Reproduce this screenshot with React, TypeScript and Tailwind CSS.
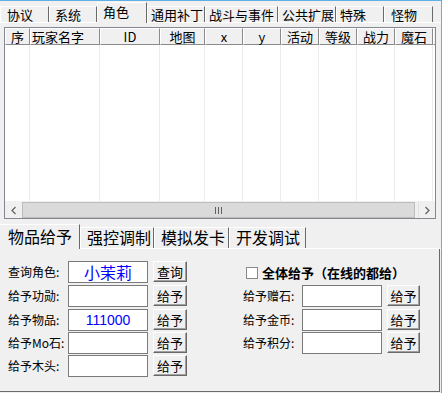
import React from 'react';

const topTabs = [
  { label: '协议', w: 'w-[49px]', pl: 'pl-[6px]' },
  { label: '系统', w: 'w-[48px]', pl: 'pl-[5px]' },
  { label: '角色', w: 'w-[50px]', pl: 'pl-[5px]', active: true },
  { label: '通用补丁', w: 'w-[58px]', pl: 'pl-[3px]' },
  { label: '战斗与事件', w: 'w-[73px]', pl: 'pl-[3px]' },
  { label: '公共扩展', w: 'w-[58px]', pl: 'pl-[3px]' },
  { label: '特殊', w: 'w-[48px]', pl: 'pl-[3px]' },
  { label: '怪物', w: 'w-[49px]', pl: 'pl-[6px]' },
];

const columns = [
  { label: '序', w: 'w-[25px]', align: 'justify-center' },
  { label: '玩家名字', w: 'w-[70px]', align: 'justify-start pl-[1px]' },
  { label: 'ID', w: 'w-[60px]', align: 'justify-center' },
  { label: '地图', w: 'w-[45px]', align: 'justify-center' },
  { label: 'x', w: 'w-[38px]', align: 'justify-center' },
  { label: 'y', w: 'w-[38px]', align: 'justify-center' },
  { label: '活动', w: 'w-[38px]', align: 'justify-center' },
  { label: '等级', w: 'w-[38px]', align: 'justify-center' },
  { label: '战力', w: 'w-[38px]', align: 'justify-center' },
  { label: '魔石', w: 'w-[38px]', align: 'justify-center' },
];

const bottomTabs = [
  { label: '物品给予', w: 'w-[80px]', active: true },
  { label: '强控调制', w: 'w-[74px]' },
  { label: '模拟发卡', w: 'w-[75px]' },
  { label: '开发调试', w: 'w-[77px]' },
];

const leftRows = [
  { label: '查询角色:', value: '小茉莉', btn: '查询', h: 'h-[24px]', big: true },
  { label: '给予功勋:', value: '', btn: '给予', h: 'h-[24px]' },
  { label: '给予物品:', value: '111000', btn: '给予', h: 'h-[23px]' },
  { label: '给予Mo石:', value: '', btn: '给予', h: 'h-[23px]' },
  { label: '给予木头:', value: '', btn: '给予', h: 'h-[23px]' },
];

const rightRows = ['给予赠石:', '给予金币:', '给予积分:'];

const Btn = ({ text, w }: { text: string; w: string }) => (
  <div
    className={`${w} h-[21px] flex items-center justify-center bg-[#f0f0f0] border-t border-l border-white border-r border-b border-r-[#696969] border-b-[#696969] shadow-[inset_-1px_-1px_0_#a0a0a0] text-[13px] leading-[16px] text-black`}
  >
    {text}
  </div>
);

const Chevron = ({ dir }: { dir: 'left' | 'right' }) => (
  <svg width="8" height="9" viewBox="0 0 8 9">
    <path
      d={dir === 'left' ? 'M5.5 1 L2 4.5 L5.5 8' : 'M2.5 1 L6 4.5 L2.5 8'}
      fill="none"
      stroke="#606060"
      strokeWidth="1.2"
    />
  </svg>
);

const App = () => {
  return (
    <div className="w-[442px] h-[393px] flex flex-col bg-[#f0f0f0] border-t border-r border-[#5fb0e6] overflow-hidden font-['Noto_Sans_CJK_SC',sans-serif] text-black">
      {/* top tab strip */}
      <div className="flex items-end h-[22px] border-b border-white">
        {topTabs.map((t) =>
          t.active ? (
            <div
              key={t.label}
              className={`${t.w} ${t.pl} h-[21px] -mb-px relative z-10 bg-[#f0f0f0] border-t border-l border-white border-r border-r-[#696969] pt-[1px] text-[13px] leading-[16px]`}
            >
              {t.label}
            </div>
          ) : (
            <div
              key={t.label}
              className={`${t.w} ${t.pl} h-[16px] flex items-center border-t border-l border-white border-r border-r-[#696969] text-[13px] leading-[14px] whitespace-nowrap`}
            >
              {t.label}
            </div>
          )
        )}
      </div>

      {/* list view */}
      <div className="ml-[4px] mt-[4px] w-[432px] h-[192px] border border-[#828790] flex flex-col bg-white">
        <div className="flex h-[17px] bg-[#f0f0f0]">
          {columns.map((c) => (
            <div
              key={c.label}
              className={`${c.w} ${c.align} flex items-center border-t border-l border-white border-r border-b border-r-[#8a8a8a] border-b-[#8a8a8a] text-[13px] leading-[15px]`}
            >
              {c.label}
            </div>
          ))}
          <div className="flex-1 border-t border-l border-white border-b border-b-[#8a8a8a]" />
        </div>
        <div className="flex flex-1">
          {columns.map((c) => (
            <div key={c.label} className={`${c.w} border-r border-[#ececec]`} />
          ))}
        </div>
        <div className="flex h-[17px] bg-[#f0f0f0] border-t border-[#f0f0f0]">
          <div className="w-[17px] flex items-center justify-center">
            <Chevron dir="left" />
          </div>
          <div className="flex-1 bg-[#dadada] border border-[#bcbcbc] flex items-center justify-center gap-[2px]">
            <span className="w-px h-[7px] bg-[#606060]" />
            <span className="w-px h-[7px] bg-[#606060]" />
            <span className="w-px h-[7px] bg-[#606060]" />
          </div>
          <div className="w-[3px]" />
          <div className="w-[17px] flex items-center justify-center border-l border-[#e0e0e0]">
            <Chevron dir="right" />
          </div>
        </div>
      </div>

      {/* bottom tab strip */}
      <div className="mt-[4px] flex items-end h-[26px] border-b border-white">
        {bottomTabs.map((t) =>
          t.active ? (
            <div
              key={t.label}
              className={`${t.w} h-[25px] -mb-px relative z-10 bg-[#f0f0f0] border-t border-white border-r border-r-[#696969] pl-[8px] pt-[2px] text-[16px] leading-[19px]`}
            >
              {t.label}
            </div>
          ) : (
            <div
              key={t.label}
              className={`${t.w} h-[21px] border-t border-l border-white border-r border-r-[#696969] pl-[6px] text-[16px] leading-[19px] whitespace-nowrap`}
            >
              {t.label}
            </div>
          )
        )}
      </div>

      {/* bottom panel */}
      <div className="flex-1 mb-px mr-px border-r border-b border-[#696969] flex pt-[12px] pl-[8px]">
        <div className="flex flex-col">
          {leftRows.map((r) => (
            <div key={r.label} className={`${r.h} flex items-start`}>
              <div className="w-[60px] h-[22px] flex items-center text-[12px] leading-[14px] whitespace-nowrap">
                {r.label}
              </div>
              <div
                className={`w-[80px] h-[22px] bg-white border border-[#7a7a7a] flex items-center justify-center text-[#0000ff] ${
                  r.big
                    ? 'text-[16px] leading-[18px]'
                    : "font-['Liberation_Sans',sans-serif] text-[14px] leading-[16px]"
                }`}
              >
                {r.value}
              </div>
              <div className="ml-[5px]">
                <Btn text={r.btn} w="w-[34px]" />
              </div>
            </div>
          ))}
        </div>

        <div className="flex flex-col ml-[56px]">
          <div className="h-[24px] flex items-center pl-[3px]">
            <div className="w-[12px] h-[12px] bg-white border border-[#8a8a8a]" />
            <div className="ml-[4px] text-[13px] leading-[16px] font-bold whitespace-nowrap">
              全体给予（在线的都给）
            </div>
          </div>
          {rightRows.map((label, i) => (
            <div key={label} className={`${i === 0 ? 'h-[24px]' : 'h-[23px]'} flex items-start`}>
              <div className="w-[59px] h-[22px] flex items-center text-[12px] leading-[14px] whitespace-nowrap">
                {label}
              </div>
              <div className="w-[80px] h-[22px] bg-white border border-[#7a7a7a]" />
              <div className="ml-[5px]">
                <Btn text="给予" w="w-[33px]" />
              </div>
            </div>
          ))}
        </div>
      </div>
    </div>
  );
};

export default App;
